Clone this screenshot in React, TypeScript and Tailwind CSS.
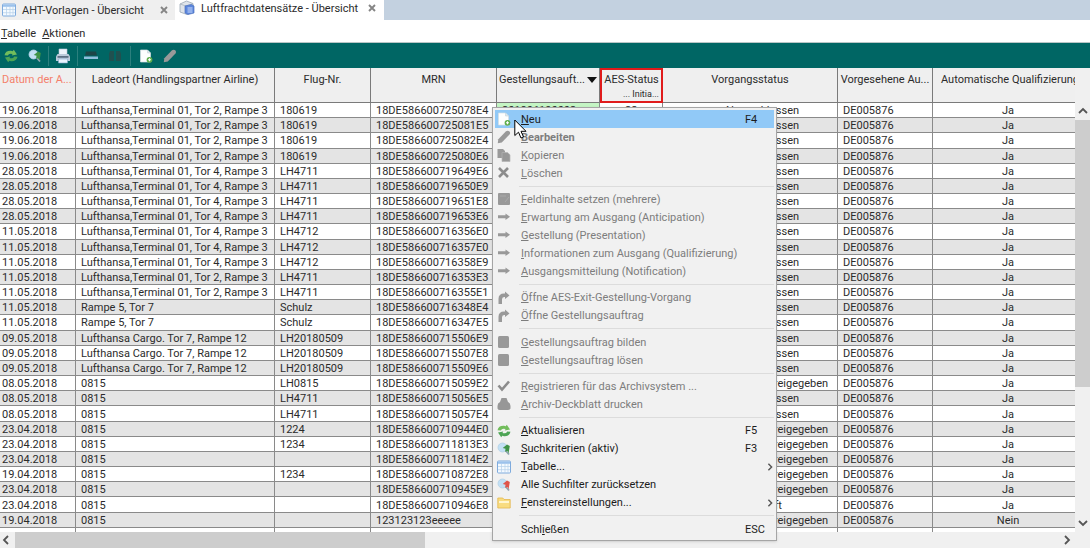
import React from "react";

type Row = [string, string, string, string, string, string];

const tor2 = "Lufthansa,Terminal 01, Tor 2, Rampe 3";
const tor4 = "Lufthansa,Terminal 01, Tor 4, Rampe 3";
const cargo = "Lufthansa Cargo. Tor 7, Rampe 12";
const done = "Abgeschlossen";
const released = "Ausgang freigegeben";

// Datum, Ladeort, Flug-Nr., MRN, Vorgangsstatus, Qualifizierung
const rows: Row[] = [
  ["19.06.2018", tor2, "180619", "18DE586600725078E4", done, "Ja"],
  ["19.06.2018", tor2, "180619", "18DE586600725081E5", done, "Ja"],
  ["19.06.2018", tor2, "180619", "18DE586600725082E4", done, "Ja"],
  ["19.06.2018", tor2, "180619", "18DE586600725080E6", done, "Ja"],
  ["28.05.2018", tor4, "LH4711", "18DE586600719649E6", done, "Ja"],
  ["28.05.2018", tor4, "LH4711", "18DE586600719650E9", done, "Ja"],
  ["28.05.2018", tor4, "LH4711", "18DE586600719651E8", done, "Ja"],
  ["28.05.2018", tor4, "LH4711", "18DE586600719653E6", done, "Ja"],
  ["11.05.2018", tor4, "LH4712", "18DE586600716356E0", done, "Ja"],
  ["11.05.2018", tor4, "LH4712", "18DE586600716357E0", done, "Ja"],
  ["11.05.2018", tor4, "LH4712", "18DE586600716358E9", done, "Ja"],
  ["11.05.2018", tor2, "LH4711", "18DE586600716353E3", done, "Ja"],
  ["11.05.2018", tor2, "LH4711", "18DE586600716355E1", done, "Ja"],
  ["11.05.2018", "Rampe 5, Tor 7", "Schulz", "18DE586600716348E4", done, "Ja"],
  ["11.05.2018", "Rampe 5, Tor 7", "Schulz", "18DE586600716347E5", done, "Ja"],
  ["09.05.2018", cargo, "LH20180509", "18DE586600715506E9", done, "Ja"],
  ["09.05.2018", cargo, "LH20180509", "18DE586600715507E8", done, "Ja"],
  ["09.05.2018", cargo, "LH20180509", "18DE586600715509E6", done, "Ja"],
  ["08.05.2018", "0815", "LH0815", "18DE586600715059E2", released, "Ja"],
  ["08.05.2018", "0815", "LH4711", "18DE586600715056E5", done, "Ja"],
  ["08.05.2018", "0815", "LH4711", "18DE586600715057E4", done, "Ja"],
  ["23.04.2018", "0815", "1224", "18DE586600710944E0", released, "Ja"],
  ["23.04.2018", "0815", "1234", "18DE586600711813E3", released, "Ja"],
  ["23.04.2018", "0815", "", "18DE586600711814E2", released, "Ja"],
  ["19.04.2018", "0815", "1234", "18DE586600710872E8", released, "Ja"],
  ["23.04.2018", "0815", "", "18DE586600710945E9", released, "Ja"],
  ["23.04.2018", "0815", "", "18DE586600710946E8", "Neu geprüft", "Ja"],
  ["19.04.2018", "0815", "", "123123123eeeee", released, "Nein"],
];

type IconName =
  | "new" | "pencil" | "copy" | "delete" | "sheet" | "arrow" | "turn"
  | "block" | "check" | "printer" | "refresh" | "search" | "table"
  | "filterOff" | "folder" | "none";

type Item = {
  icon: IconName;
  label: string;
  // index of the underlined letter
  u?: number;
  keys?: string;
  sub?: boolean;
  off?: boolean;
};

const groups: Item[][] = [
  [
    { icon: "new", label: "Neu", u: 0, keys: "F4" },
    { icon: "pencil", label: "Bearbeiten", u: 0, off: true },
    { icon: "copy", label: "Kopieren", u: 0, off: true },
    { icon: "delete", label: "Löschen", u: 0, off: true },
  ],
  [
    { icon: "sheet", label: "Feldinhalte setzen (mehrere)", u: 0, off: true },
    { icon: "arrow", label: "Erwartung am Ausgang (Anticipation)", u: 0, off: true },
    { icon: "arrow", label: "Gestellung (Presentation)", u: 0, off: true },
    { icon: "arrow", label: "Informationen zum Ausgang (Qualifizierung)", u: 0, off: true },
    { icon: "arrow", label: "Ausgangsmitteilung (Notification)", u: 0, off: true },
  ],
  [
    { icon: "turn", label: "Öffne AES-Exit-Gestellung-Vorgang", u: 0, off: true },
    { icon: "turn", label: "Öffne Gestellungsauftrag", u: 0, off: true },
  ],
  [
    { icon: "block", label: "Gestellungsauftrag bilden", u: 0, off: true },
    { icon: "block", label: "Gestellungsauftrag lösen", u: 0, off: true },
  ],
  [
    { icon: "check", label: "Registrieren für das Archivsystem ...", u: 0, off: true },
    { icon: "printer", label: "Archiv-Deckblatt drucken", u: 0, off: true },
  ],
  [
    { icon: "refresh", label: "Aktualisieren", u: 0, keys: "F5" },
    { icon: "search", label: "Suchkriterien (aktiv)", u: 0, keys: "F3" },
    { icon: "table", label: "Tabelle...", u: 0, sub: true },
    { icon: "filterOff", label: "Alle Suchfilter zurücksetzen" },
    { icon: "folder", label: "Fenstereinstellungen...", u: 0, sub: true },
  ],
  [{ icon: "none", label: "Schließen", u: 4, keys: "ESC" }],
];

function Icon({ name, size = "size-3.5" }: { name: IconName; size?: string }) {
  return (
    <svg viewBox="0 0 14 14" className={`${size} shrink-0`} aria-hidden="true">
      {name === "new" && (
        <>
          <path d="M1.5 1h7l3 3v9h-10z" fill="#fdfefe" stroke="#d5dfe4" strokeWidth=".7" />
          <path d="M8.5 1v3h3" fill="#dfe8ec" stroke="#c5d2d8" strokeWidth=".6" />
          <circle cx="10.5" cy="10.8" r="2.9" fill="#5fae4c" />
          <path d="M10.5 9.3v3M9 10.8h3" stroke="#fff" strokeWidth="1.1" />
        </>
      )}
      {name === "pencil" && (
        <path d="M.8 13.200 1.300 9.200 9 1.200q2-1.200 3.500.4 1.300 1.500 0 3L4.800 12.600z" fill="#999" />
      )}
      {name === "copy" && (
        <>
          <path d="M.5 1h5.500l2 2v7h-7.500z" fill="#9a9a9a" />
          <path d="M5 4.500h5.500l2.500 2.300v6.700H5z" fill="#989898" stroke="#b4b4b4" strokeWidth=".7" />
        </>
      )}
      {name === "delete" && (
        <path d="m2 2 9 9M11 2 2 11" stroke="#8c8c8c" strokeWidth="2.600" />
      )}
      {name === "sheet" && (
        <>
          <rect x="1" y="1" width="12" height="12" rx="1" fill="#999" />
          <path d="m8 10 4-5M3 4h6" stroke="#a9a9a9" />
        </>
      )}
      {name === "arrow" && <path d="M1 5.300h7.500V3.500L13 6.800l-4.500 3.300V8.300H1z" fill="#999" />}
      {name === "turn" && (
        <path d="M1.500 13V8q0-5.500 5.500-5.500h1V.5l4.500 4L8 8V6H7Q5 6 5 8.500V13z" fill="#999" />
      )}
      {name === "block" && <rect x="1" y="1" width="11" height="12" rx="1.500" fill="#999" />}
      {name === "check" && (
        <path d="m1.500 6.500 3.500 4L12 2.500" fill="none" stroke="#8c8c8c" strokeWidth="2.600" />
      )}
      {name === "printer" && (
        <path d="M3 5 4.500 1h5L11 5q2.500 1 2.500 4v2.500q-1 1.500-2.500 1.500H3Q1 13 .5 11.500V9q0-3 2.500-4z" fill="#979797" />
      )}
      {name === "refresh" && (
        <>
          <path d="M.5 6.200Q1.500 1.500 7 1.800l1.700.5L9.800.8 13 5.500 7.800 6.500l.7-1.500Q5 3.800 3.800 6.500z" fill="#72bd5c" />
          <path d="M13.500 7.800Q12.500 12.500 7 12.200l-1.700-.5L4.200 13.200 1 8.500 6.200 7.500 5.500 9Q9 10.200 10.200 7.500z" fill="#4da455" />
        </>
      )}
      {(name === "search" || name === "filterOff") && (
        <>
          <circle cx="5.500" cy="5.500" r="4.500" fill="#c3e0f5" stroke="#b1d1e6" strokeWidth=".8" />
          <path d="m8.500 8.500 3.500 4" stroke="#8fa5b2" strokeWidth="1.800" />
          <path
            d="M12.800 4 10 2.500 5.800 6l2.700.8-.3 3L10.500 9l1 2.500z"
            fill={name === "search" ? "#3f9348" : "#e0554b"}
          />
        </>
      )}
      {name === "table" && (
        <>
          <rect x=".5" y="1" width="13" height="12" rx="1" fill="#f4faff" stroke="#7fabdd" />
          <path d="M1 1.500h12v2.300H1z" fill="#9cc2ec" />
          <path d="M1 6.500h12M1 9.700h12M4.500 4v9M8 4v9M11 4v9" stroke="#b5d0ea" strokeWidth=".7" />
        </>
      )}
      {name === "folder" && (
        <>
          <path d="M.8 2h5L7 3.500h6.200V12H.8z" fill="#f8dc80" stroke="#e5b74c" strokeWidth=".8" />
          <path d="M2 5h10v2H2z" fill="#fff6cf" />
        </>
      )}
    </svg>
  );
}

function PrinterIcon() {
  return (
    <svg viewBox="0 0 16 16" className="size-4" aria-hidden="true">
      <path d="M4 1h8v6H4z" fill="#eef4fb" stroke="#b8c8d8" strokeWidth=".6" />
      <path d="M2.500 6h11L15 8.500V13H1V8.500z" fill="#bccbdb" />
      <path d="M2.500 8h11v1.800h-11z" fill="#5d7084" />
      <path d="M3.500 11h9v4h-9z" fill="#e9f3fd" stroke="#85a9cf" strokeWidth=".6" />
    </svg>
  );
}

function BoxIcon() {
  return (
    <svg viewBox="0 0 16 16" className="size-4 shrink-0" aria-hidden="true">
      <path d="M1 4 7.500 1 14 3.500v8L8 14.500 1 12z" fill="#dfe4ea" stroke="#9ba7b4" strokeWidth=".8" />
      <path d="m1 4 6 2 7-2.500" fill="none" stroke="#aab5c0" strokeWidth=".8" />
      <path d="m6 6 6.500-1.500L15 6v7l-6 1.500L6 13z" fill="#5c86dc" stroke="#4a70bd" strokeWidth=".7" />
      <path d="M8.500 8h5M8.500 10h5M8.500 12h5" stroke="#d9e8ff" strokeWidth=".9" />
    </svg>
  );
}

function CloseMark() {
  return (
    <svg viewBox="0 0 8 8" className="size-2" aria-hidden="true">
      <path d="m1 1 6 6M7 1 1 7" stroke="#858585" strokeWidth="1.900" />
    </svg>
  );
}

function Chevron({ d, size = "size-2.5" }: { d: string; size?: string }) {
  return (
    <svg viewBox="0 0 10 10" className={size} aria-hidden="true">
      <path d={d} fill="none" stroke="#555" strokeWidth="1.800" />
    </svg>
  );
}

function UpArrow() {
  return (
    <svg viewBox="0 0 8 8" className="size-2 shrink-0" aria-hidden="true">
      <path d="m4 0 4 4H5.500v4h-3V4H0z" fill="#62a85a" />
    </svg>
  );
}

function Label({ text, u }: { text: string; u?: number }) {
  if (u === undefined) return <>{text}</>;
  return (
    <>
      {text.slice(0, u)}
      <span className="underline underline-offset-1">{text[u]}</span>
      {text.slice(u + 1)}
    </>
  );
}

function Tabs() {
  return (
    <div role="tablist" className="flex h-5 bg-[#c3d1e0]">
      <div className="flex w-[175px] items-center bg-[#efefef] pr-[7px] pl-0.5">
        <button role="tab" aria-selected="false" className="flex flex-1 items-center gap-1.5 whitespace-nowrap">
          <Icon name="table" />
          <span className="pt-0.5">AHT-Vorlagen - Übersicht</span>
        </button>
        <button aria-label="AHT-Vorlagen schließen">
          <CloseMark />
        </button>
      </div>
      <div className="flex w-[209px] items-center bg-white pr-2 pb-1 pl-1">
        <button role="tab" aria-selected="true" className="flex flex-1 items-center gap-1.5 whitespace-nowrap">
          <BoxIcon />
          <span className="pt-0.5">Luftfrachtdatensätze - Übersicht</span>
        </button>
        <button aria-label="Luftfrachtdatensätze schließen">
          <CloseMark />
        </button>
      </div>
    </div>
  );
}

function Toolbar() {
  return (
    <div role="toolbar" className="flex h-[26px] items-center border-t border-[#b9c6c6] bg-[#006664] pl-1">
      <button aria-label="Aktualisieren" className="mr-2.5">
        <Icon name="refresh" />
      </button>
      <button aria-label="Suchen">
        <Icon name="search" />
      </button>
      <span className="mx-1.5 h-5 w-px bg-[#2c807e]" />
      <button aria-label="Drucken">
        <PrinterIcon />
      </button>
      <span className="mx-1.5 h-5 w-px bg-[#2c807e]" />
      <button aria-label="Zeile" className="mr-2.5">
        <svg viewBox="0 0 14 14" className="size-3.5" aria-hidden="true">
          <path d="M2 2.500h10l1 4H1z" fill="#1d4547" />
          <path d="M0 7.500h14V10H0z" fill="#8fbfdc" />
        </svg>
      </button>
      <button aria-label="Spalten">
        <svg viewBox="0 0 14 14" className="size-3.5" aria-hidden="true">
          <path d="M2 2h4v10H1V5zM8 2h4l1 3v7H8z" fill="#20504f" />
        </svg>
      </button>
      <span className="mx-2 h-5 w-px bg-[#2c807e]" />
      <button aria-label="Neu" className="mr-2.5">
        <Icon name="new" />
      </button>
      <button aria-label="Bearbeiten">
        <Icon name="pencil" />
      </button>
    </div>
  );
}

const th = "overflow-hidden whitespace-nowrap border-r border-b border-[#7a7a7a] px-0.5 pt-[5px] align-top font-normal leading-[14px]";
const td = "overflow-hidden whitespace-nowrap border-r border-b border-[#8a8a8a] pt-0.5 pb-0 pl-[5px] leading-3";

function DataTable() {
  return (
    <table className="h-full w-full table-fixed border-separate border-spacing-0">
      <colgroup>
        <col className="w-[76px]" />
        <col className="w-[199px]" />
        <col className="w-[96px]" />
        <col className="w-[126px]" />
        <col className="w-[103px]" />
        <col className="w-[63px]" />
        <col className="w-[175px]" />
        <col className="w-[95px]" />
        <col />
      </colgroup>
      <thead className="bg-[#efefef]">
        <tr className="h-[35px]">
          <th className={`${th} text-left text-[#f47f6b]`}>Datum der A...</th>
          <th className={th}>Ladeort (Handlingspartner Airline)</th>
          <th className={th}>Flug-Nr.</th>
          <th className={th}>MRN</th>
          <th className={th}>
            <span className="flex items-center">
              Gestellungsauft...
              <svg viewBox="0 0 10 6" className="ml-auto h-1.5 w-2.5 shrink-0" aria-hidden="true">
                <path d="M0 0h10L5 6z" fill="#111" />
              </svg>
            </span>
          </th>
          <th className="border-2 border-[#e01b1b] px-0.5 pt-[3px] align-top leading-[14px] font-normal whitespace-nowrap">
            AES-Status
            <span className="block text-right text-[9px] leading-[14px]">... Initia...</span>
          </th>
          <th className={th}>Vorgangsstatus</th>
          <th className={th}>Vorgesehene Au...</th>
          <th className="overflow-hidden border-b border-[#7a7a7a] pt-[5px] pl-2 text-left align-top leading-[14px] font-normal whitespace-nowrap">
            Automatische Qualifizierung
          </th>
        </tr>
      </thead>
      <tbody>
        {rows.map(([date, place, flight, mrn, status, auto], i) => (
          <tr key={mrn} className="odd:bg-white even:bg-[#e4e4e4]">
            <td className="border-r border-b border-[#8a8a8a] pt-0.5 pb-0 pl-0.5 leading-3">{date}</td>
            <td className={td}>{place}</td>
            <td className={td}>{flight}</td>
            <td className={td}>{mrn}</td>
            <td className={`${td} bg-[#c4f5c4]`}>{i === 0 ? "201806190003" : ""}</td>
            <td className={td}>
              {i === 0 && (
                <span className="flex items-center gap-1 pl-2">
                  <UpArrow />
                  22
                </span>
              )}
            </td>
            <td className={td}>
              <span className="flex items-center gap-1 pl-11">
                <UpArrow />
                {status}
              </span>
            </td>
            <td className={td}>DE005876</td>
            <td className="border-b border-[#8a8a8a] pt-0.5 pb-0 pl-2 text-center leading-3">{auto}</td>
          </tr>
        ))}
      </tbody>
      <tfoot>
        <tr className="h-1">
          {[0, 1, 2, 3, 4, 5, 6, 7].map((n) => (
            <td key={n} className="border-r border-[#8a8a8a] p-0" />
          ))}
          <td className="p-0" />
        </tr>
      </tfoot>
    </table>
  );
}

function ContextMenu() {
  return (
    <div
      role="menu"
      className="absolute top-[107px] left-[492px] flex h-[434px] w-[285px] flex-col border border-[#a5a5a5] bg-[#f1f1f1] p-0.5 shadow-sm"
    >
      {groups.map((items, g) => (
        <React.Fragment key={g}>
          {g > 0 && (
            <div role="separator" className="ml-6 flex flex-1 items-center">
              <span className="h-px w-full bg-[#dcdcdc]" />
            </div>
          )}
          {items.map((item) => (
            <button
              key={item.label}
              role="menuitem"
              disabled={item.off}
              className={`flex h-[18px] shrink-0 items-center pl-0.5 text-left whitespace-nowrap ${
                item.label === "Neu" ? "bg-[#91c9f7]" : ""
              } ${item.off ? "text-[#7d7d7d]" : "text-[#1c1c1c]"} ${
                item.label === "Bearbeiten" ? "font-bold" : ""
              }`}
            >
              <Icon name={item.icon} />
              <span className="ml-2.5 flex-1 pt-0.5">
                <Label text={item.label} u={item.u} />
              </span>
              {item.keys && <span className="w-[29px] pt-0.5">{item.keys}</span>}
              {item.sub && <Chevron d="m3 1 4 4-4 4" size="size-2" />}
            </button>
          ))}
        </React.Fragment>
      ))}
    </div>
  );
}

export default function App() {
  return (
    <div className="relative flex h-screen flex-col overflow-hidden bg-white font-['Roboto','Open_Sans',sans-serif] text-[11px] text-[#2b2b2b]">
      <Tabs />

      {/* Menüleiste */}
      <nav className="flex h-[22px] items-center gap-1.5 pt-1.5 pl-px">
        <button>
          <Label text="Tabelle" u={0} />
        </button>
        <button>
          <Label text="Aktionen" u={0} />
        </button>
      </nav>

      <Toolbar />

      {/* Tabelle mit Scrollleisten */}
      <div className="flex min-h-0 flex-1">
        <div className="min-w-0 flex-1">
          <DataTable />
        </div>
        <div className="flex w-[15px] flex-col items-center bg-[#f0f0f0] pt-[38px]">
          <Chevron d="m1 7 4-4 4 4" />
          <div className="mt-1 h-[267px] w-full bg-[#cdcdcd]" />
          <div className="mt-auto mb-1">
            <Chevron d="m1 3 4 4 4-4" />
          </div>
        </div>
      </div>
      <div className="flex h-4 items-center bg-[#f0f0f0] pr-[18px] pl-px">
        <Chevron d="M7 1 3 5l4 4" />
        <div className="ml-1 h-full w-[410px] bg-[#cdcdcd]" />
        <div className="ml-auto">
          <Chevron d="m3 1 4 4-4 4" />
        </div>
      </div>

      <ContextMenu />

      {/* Mauszeiger */}
      <svg viewBox="0 0 13 20" className="absolute top-[119px] left-[514px] h-5 w-[13px]" aria-hidden="true">
        <path
          d="M.8 1v15.500l3.700-3.300 2.500 5.800 2.500-1.100-2.500-5.600h5z"
          fill="#fff"
          stroke="#000"
          strokeWidth="1"
        />
      </svg>
    </div>
  );
}
